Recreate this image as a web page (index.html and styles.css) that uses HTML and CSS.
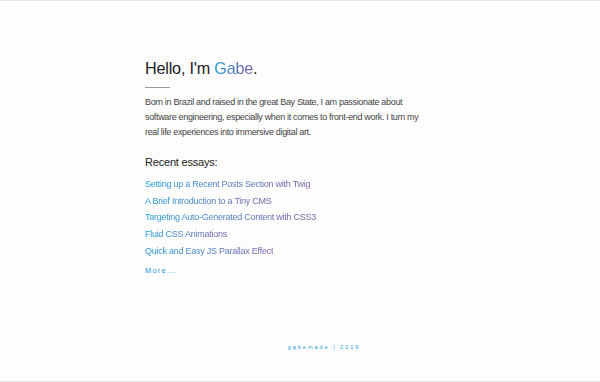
FILE: index.html
```html
<!DOCTYPE html>
<html lang="en">
<head>
  <meta charset="UTF-8">
  <title>gabemade</title>
  <link rel="stylesheet" href="styles.css">
</head>
<body>
  <div class="page">
    <main class="intro">
      <h1>Hello, I'm <span class="grad">Gabe</span>.</h1>
      <hr class="rule">
      <p class="bio">Born in Brazil and raised in the great Bay State, I am passionate about software engineering, especially when it comes to front-end work. I turn my real life experiences into immersive digital art.</p>

      <h2>Recent essays:</h2>
      <ul class="essays">
        <li><a class="grad" href="#">Setting up a Recent Posts Section with Twig</a></li>
        <li><a class="grad" href="#">A Brief Introduction to a Tiny CMS</a></li>
        <li><a class="grad" href="#">Targeting Auto-Generated Content with CSS3</a></li>
        <li><a class="grad" href="#">Fluid CSS Animations</a></li>
        <li><a class="grad" href="#">Quick and Easy JS Parallax Effect</a></li>
      </ul>
      <a class="more" href="#">More...</a>
    </main>

    <footer class="footer">gabemade | 2019</footer>
  </div>
</body>
</html>
```

FILE: styles.css
```css
body {
  margin: 0;
  background-color: #fdfdfd;
  font-family: "Liberation Sans", Arial, sans-serif;
  color: #333;
}

.page {
  height: 380px;
  border-top: 1px solid #e6e6e6;
  border-bottom: 1px solid #e6e6e6;
  display: flex;
  flex-direction: column;
}

.intro {
  padding: 55px 0 0 145px;
  flex: 1;
}

.grad {
  display: inline-block;
  background: linear-gradient(90deg, #1f9bd6, #7c5ca3);
  -webkit-background-clip: text;
  background-clip: text;
  color: transparent;
  text-decoration: none;
}

h1 {
  font-size: 16.2px;
  letter-spacing: -0.2px;
  font-weight: normal;
  margin: 0;
  line-height: 24px;
  color: #222;
}

.rule {
  width: 25px;
  margin: 7px 0 0 0;
  border: none;
  border-top: 1px solid #999;
}

.bio {
  width: 282px;
  font-size: 9px;
  letter-spacing: -0.33px;
  line-height: 15px;
  margin: 7px 0 0 0;
  color: #444;
}

h2 {
  font-size: 11px;
  letter-spacing: -0.2px;
  line-height: 14px;
  font-weight: normal;
  margin: 15px 0 0 0;
  color: #222;
}

.essays {
  list-style: none;
  margin: 7px 0 0 0;
  padding: 0;
}

.essays li {
  font-size: 9px;
  letter-spacing: -0.25px;
  line-height: 16.7px;
}

.more {
  display: block;
  width: max-content;
  margin-top: 6px;
  font-size: 7.5px;
  line-height: 10px;
  letter-spacing: 1.2px;
  color: #1f9bd6;
  text-decoration: none;
}

.footer {
  text-align: center;
  font-size: 5.5px;
  line-height: 8px;
  letter-spacing: 2px;
  color: #1f9bd6;
  padding: 0 0 30px 48px;
}
```
